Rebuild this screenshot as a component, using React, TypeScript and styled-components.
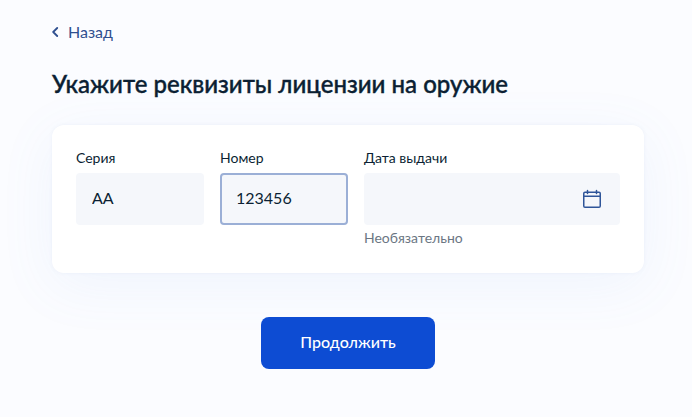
import React, { useState } from "react";
import styled, { createGlobalStyle } from "styled-components";

const GlobalStyle = createGlobalStyle`
  *, *::before, *::after {
    box-sizing: border-box;
  }
  body {
    margin: 0;
    min-height: 100vh;
    background: #fbfcff;
    color: #0b1f33;
    font-family: Lato, "Noto Sans", sans-serif;
    font-size: 16px;
    line-height: 24px;
  }
`;

const Page = styled.main`
  padding: 19px 48px 48px 52px;
`;

const BackLink = styled.a`
  display: inline-flex;
  align-items: center;
  gap: 9px;
  color: #2f4f8f;
  text-decoration: none;
`;

const Title = styled.h1`
  margin: 24px 0 25px;
  font-size: 24px;
  line-height: 32px;
  font-weight: 500;
  -webkit-text-stroke: 0.4px currentColor;
`;

const Card = styled.section`
  display: grid;
  grid-template-columns: 1fr 1fr 2fr;
  gap: 16px;
  padding: 24px;
  border-radius: 12px;
  background: #ffffff;
  box-shadow: 0 0 4px rgba(60, 100, 170, 0.06), 0 12px 56px rgba(100, 150, 230, 0.08);
`;

const Field = styled.div`
  display: flex;
  flex-direction: column;
  min-width: 0;
`;

const Label = styled.label`
  padding-bottom: 6px;
  font-size: 14px;
  line-height: 18px;
`;

const InputBox = styled.div<{ $active?: boolean }>`
  display: flex;
  align-items: center;
  height: 52px;
  border: 2px solid ${({ $active }) => ($active ? "#9bafd6" : "#f5f7fb")};
  border-radius: 4px;
  background: #f5f7fb;
`;

const TextInput = styled.input`
  flex: 1;
  min-width: 0;
  height: 100%;
  padding: 0 14px 3px;
  border: 0;
  outline: 0;
  background: transparent;
  color: inherit;
  font: inherit;
`;

const CalendarButton = styled.button`
  display: flex;
  flex: none;
  margin-right: 14px;
  padding: 0;
  border: 0;
  background: none;
  color: #2f5599;
  cursor: pointer;
`;

const Hint = styled.span`
  padding: 4px 0 2px;
  color: #6b7683;
  font-size: 14px;
  line-height: 18px;
`;

const Actions = styled.div`
  display: flex;
  justify-content: center;
  margin-top: 44px;
`;

const SubmitButton = styled.button`
  height: 52px;
  padding: 0 39px 2px;
  border: 0;
  border-radius: 8px;
  background: #0d4cd3;
  color: #ffffff;
  font: inherit;
  font-weight: 500;
  cursor: pointer;
`;

const ChevronIcon = () => (
  <svg width="7" height="10" viewBox="0 0 7 10" fill="none" aria-hidden="true">
    <path d="M5.2 1 1.2 5l4 4" stroke="currentColor" strokeWidth="1.8" strokeLinecap="round" strokeLinejoin="round" />
  </svg>
);

const CalendarIcon = () => (
  <svg width="24" height="24" viewBox="0 0 24 24" fill="none" stroke="currentColor" strokeWidth="1.5" aria-hidden="true">
    <rect x="3.75" y="5.25" width="16.5" height="15" rx="1.25" />
    <path d="M3.75 9.25h16.5" />
    <path d="M7.5 3.5v3M16.5 3.5v3" strokeLinecap="round" />
  </svg>
);

export default function App() {
  const [series, setSeries] = useState("АА");
  const [number, setNumber] = useState("123456");
  const [date, setDate] = useState("");

  return (
    <>
      <GlobalStyle />
      <Page>
        <BackLink href="#back">
          <ChevronIcon />
          Назад
        </BackLink>
        <Title>Укажите реквизиты лицензии на оружие</Title>
        <form onSubmit={(e) => e.preventDefault()}>
          <Card>
            <Field>
              <Label htmlFor="series">Серия</Label>
              <InputBox>
                <TextInput id="series" value={series} onChange={(e) => setSeries(e.target.value)} />
              </InputBox>
            </Field>
            <Field>
              <Label htmlFor="number">Номер</Label>
              <InputBox $active>
                <TextInput id="number" value={number} onChange={(e) => setNumber(e.target.value)} />
              </InputBox>
            </Field>
            <Field>
              <Label htmlFor="date">Дата выдачи</Label>
              <InputBox>
                <TextInput
                  id="date"
                  value={date}
                  aria-describedby="date-hint"
                  onChange={(e) => setDate(e.target.value)}
                />
                <CalendarButton type="button" aria-label="Открыть календарь">
                  <CalendarIcon />
                </CalendarButton>
              </InputBox>
              <Hint id="date-hint">Необязательно</Hint>
            </Field>
          </Card>
          <Actions>
            <SubmitButton type="submit">Продолжить</SubmitButton>
          </Actions>
        </form>
      </Page>
    </>
  );
}
